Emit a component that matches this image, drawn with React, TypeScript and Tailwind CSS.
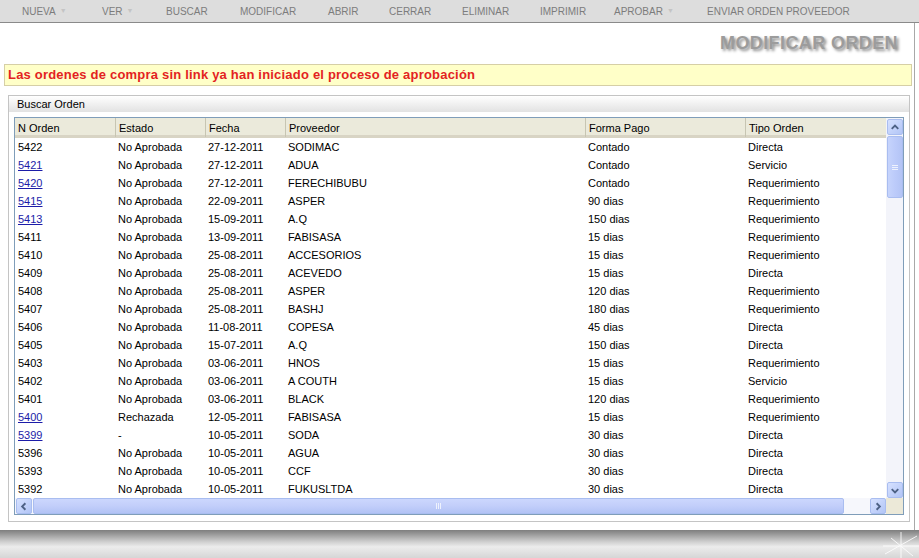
import React from 'react'

type Row = { n: string; link?: boolean; estado: string; fecha: string; prov: string; pago: string; tipo: string }

const rows: Row[] = [
  { n: '5422', estado: 'No Aprobada', fecha: '27-12-2011', prov: 'SODIMAC', pago: 'Contado', tipo: 'Directa' },
  { n: '5421', link: true, estado: 'No Aprobada', fecha: '27-12-2011', prov: 'ADUA', pago: 'Contado', tipo: 'Servicio' },
  { n: '5420', link: true, estado: 'No Aprobada', fecha: '27-12-2011', prov: 'FERECHIBUBU', pago: 'Contado', tipo: 'Requerimiento' },
  { n: '5415', link: true, estado: 'No Aprobada', fecha: '22-09-2011', prov: 'ASPER', pago: '90 dias', tipo: 'Requerimiento' },
  { n: '5413', link: true, estado: 'No Aprobada', fecha: '15-09-2011', prov: 'A.Q', pago: '150 dias', tipo: 'Requerimiento' },
  { n: '5411', estado: 'No Aprobada', fecha: '13-09-2011', prov: 'FABISASA', pago: '15 dias', tipo: 'Requerimiento' },
  { n: '5410', estado: 'No Aprobada', fecha: '25-08-2011', prov: 'ACCESORIOS', pago: '15 dias', tipo: 'Requerimiento' },
  { n: '5409', estado: 'No Aprobada', fecha: '25-08-2011', prov: 'ACEVEDO', pago: '15 dias', tipo: 'Directa' },
  { n: '5408', estado: 'No Aprobada', fecha: '25-08-2011', prov: 'ASPER', pago: '120 dias', tipo: 'Requerimiento' },
  { n: '5407', estado: 'No Aprobada', fecha: '25-08-2011', prov: 'BASHJ', pago: '180 dias', tipo: 'Requerimiento' },
  { n: '5406', estado: 'No Aprobada', fecha: '11-08-2011', prov: 'COPESA', pago: '45 dias', tipo: 'Directa' },
  { n: '5405', estado: 'No Aprobada', fecha: '15-07-2011', prov: 'A.Q', pago: '150 dias', tipo: 'Directa' },
  { n: '5403', estado: 'No Aprobada', fecha: '03-06-2011', prov: 'HNOS', pago: '15 dias', tipo: 'Requerimiento' },
  { n: '5402', estado: 'No Aprobada', fecha: '03-06-2011', prov: 'A COUTH', pago: '15 dias', tipo: 'Servicio' },
  { n: '5401', estado: 'No Aprobada', fecha: '03-06-2011', prov: 'BLACK', pago: '120 dias', tipo: 'Requerimiento' },
  { n: '5400', link: true, estado: 'Rechazada', fecha: '12-05-2011', prov: 'FABISASA', pago: '15 dias', tipo: 'Requerimiento' },
  { n: '5399', link: true, estado: '-', fecha: '10-05-2011', prov: 'SODA', pago: '30 dias', tipo: 'Directa' },
  { n: '5396', estado: 'No Aprobada', fecha: '10-05-2011', prov: 'AGUA', pago: '30 dias', tipo: 'Directa' },
  { n: '5393', estado: 'No Aprobada', fecha: '10-05-2011', prov: 'CCF', pago: '30 dias', tipo: 'Directa' },
  { n: '5392', estado: 'No Aprobada', fecha: '10-05-2011', prov: 'FUKUSLTDA', pago: '30 dias', tipo: 'Directa' },
]

const menu = [
  { label: 'NUEVA', arrow: true, w: 'w-[80px]' },
  { label: 'VER', arrow: true, w: 'w-[64px]' },
  { label: 'BUSCAR', w: 'w-[74px]' },
  { label: 'MODIFICAR', w: 'w-[88px]' },
  { label: 'ABRIR', w: 'w-[61px]' },
  { label: 'CERRAR', w: 'w-[73px]' },
  { label: 'ELIMINAR', w: 'w-[78px]' },
  { label: 'IMPRIMIR', w: 'w-[74px]' },
  { label: 'APROBAR', arrow: true, w: 'w-[93px]' },
  { label: 'ENVIAR ORDEN PROVEEDOR', w: 'w-auto' },
]

const cols = 'grid grid-cols-[100px_90px_80px_300px_160px_1fr]'

function Chevron({ dir }: { dir: 'up' | 'down' | 'left' | 'right' }) {
  const pts = {
    up: '4,9 7.5,5.5 11,9',
    down: '4,6 7.5,9.5 11,6',
    left: '9,4 5.5,7.5 9,11',
    right: '6,4 9.5,7.5 6,11',
  }[dir]
  return (
    <svg width="15" height="15" viewBox="0 0 15 15">
      <polyline points={pts} fill="none" stroke="#4d6185" strokeWidth="2" />
    </svg>
  )
}

function ScrollBtn({ dir }: { dir: 'up' | 'down' | 'left' | 'right' }) {
  return (
    <div className="flex h-[16px] w-[16px] items-center justify-center rounded-[2px] border border-[#a9bdf0] bg-linear-to-br from-[#d6e1ff] to-[#b2c5f6]">
      <Chevron dir={dir} />
    </div>
  )
}

export default function App() {
  return (
    <div className="flex h-[558px] w-[919px] flex-col overflow-hidden bg-white font-['Liberation_Sans',Arial,sans-serif]">
      {/* menu */}
      <div className="flex h-[23px] shrink-0 items-center border-b border-[#8a8a8a] bg-[#dddddd] pl-[22px] text-[10px] text-[#7c7c7c]">
        {menu.map((m) => (
          <div key={m.label} className={`${m.w} flex items-center gap-[4px] whitespace-nowrap`}>
            <span>{m.label}</span>
            {m.arrow && <span className="text-[7px] text-[#c4c4c4]">▼</span>}
          </div>
        ))}
      </div>

      {/* main */}
      <div className="flex flex-1 flex-col">
        <div className="mr-[4px] flex flex-1 flex-col border-r border-[#a8a8a8]">
          <div className="flex h-[41px] items-center justify-end pr-[16px]">
            <h1 className="text-[18px] font-bold tracking-[0.4px] text-[#9c9c9c] [text-shadow:2px_2px_3px_#8a8a8a]">
              MODIFICAR ORDEN
            </h1>
          </div>

          <div className="ml-[4px] mr-[2px] flex h-[22px] items-center border border-[#d6cfa6] bg-[#ffffc8] pl-[3px] text-[13px] font-bold tracking-[0.2px] text-[#e3231f]">
            Las ordenes de compra sin link ya han iniciado el proceso de aprobación
          </div>

          {/* panel */}
          <div className="ml-[8px] mr-[4px] mt-[9px] flex h-[427px] flex-col border border-[#c4c4c4]">
            <div className="flex h-[16px] items-center bg-linear-to-b from-[#ffffff] to-[#e2e2e2] pl-[8px] text-[11px] text-black">
              Buscar Orden
            </div>
            <div className="flex-1 px-[5px] pb-[6px] pt-[5px]">
              <div className="flex h-[398px] flex-col border border-[#7f9db9] text-[11px] text-black">
                <div className="flex flex-1">
                  <div className="flex flex-1 flex-col">
                    <div className={`${cols} h-[20px] items-center border-b-[3px] border-[#d8d4c4] bg-[#ebeadb]`}>
                      {['N Orden', 'Estado', 'Fecha', 'Proveedor', 'Forma Pago', 'Tipo Orden'].map((h, i) => (
                        <div key={h} className={`h-full pt-[2px] ${i > 0 ? 'border-l border-[#c7c5b2] pl-[3px]' : 'pl-[3px]'}`}>
                          {h}
                        </div>
                      ))}
                    </div>
                    {rows.map((r) => (
                      <div key={r.n} className={`${cols} h-[18px] items-center`}>
                        <div className="pl-[3px]">
                          {r.link ? <span className="text-[#1c1ca8] underline">{r.n}</span> : r.n}
                        </div>
                        <div className="pl-[3px]">{r.estado}</div>
                        <div className="pl-[3px]">{r.fecha}</div>
                        <div className="pl-[3px]">{r.prov}</div>
                        <div className="pl-[3px]">{r.pago}</div>
                        <div className="pl-[3px]">{r.tipo}</div>
                      </div>
                    ))}
                  </div>
                  {/* vertical scrollbar */}
                  <div className="flex w-[17px] flex-col items-center gap-[1px] bg-[#f3f4fa] pt-[1px]">
                    <ScrollBtn dir="up" />
                    <div className="flex h-[62px] w-[16px] items-center justify-center rounded-[2px] border border-[#a9bdf0] bg-linear-to-r from-[#c6d4fc] via-[#bccbfa] to-[#b3c4f5]">
                      <div className="flex flex-col gap-[1px]">
                        <div className="h-[1px] w-[6px] bg-[#eef2fd]" />
                        <div className="h-[1px] w-[6px] bg-[#eef2fd]" />
                        <div className="h-[1px] w-[6px] bg-[#eef2fd]" />
                      </div>
                    </div>
                    <div className="flex-1" />
                    <ScrollBtn dir="down" />
                  </div>
                </div>
                {/* horizontal scrollbar */}
                <div className="flex h-[17px] items-center">
                  <div className="flex flex-1 items-center gap-[1px] bg-[#f6f7fc] pl-[1px]">
                    <ScrollBtn dir="left" />
                    <div className="flex h-[16px] w-[811px] items-center justify-center rounded-[2px] border border-[#a9bdf0] bg-linear-to-b from-[#ccd7fd] via-[#c2cefa] to-[#b2c3f5]">
                      <div className="flex gap-[1px]">
                        <div className="h-[6px] w-[1px] bg-[#eef2fd]" />
                        <div className="h-[6px] w-[1px] bg-[#eef2fd]" />
                        <div className="h-[6px] w-[1px] bg-[#eef2fd]" />
                      </div>
                    </div>
                    <div className="flex-1" />
                    <ScrollBtn dir="right" />
                  </div>
                  <div className="h-full w-[17px] bg-[#ece9d8]" />
                </div>
              </div>
            </div>
          </div>
          <div className="flex-1" />
        </div>
      </div>

      {/* footer */}
      <div className="relative h-[28px] shrink-0 bg-[linear-gradient(to_bottom,#7e7e7e_0%,#989898_14%,#cfcfcf_42%,#ececec_60%,#d6d6d6_100%)]">
        <svg className="absolute right-0 top-0" width="40" height="28" viewBox="0 0 40 28">
          <g stroke="#ffffff" strokeWidth="1" opacity="0.85">
            <line x1="6" y1="24" x2="38" y2="6" />
            <line x1="12" y1="8" x2="34" y2="26" />
            <line x1="22" y1="2" x2="22" y2="28" />
            <line x1="4" y1="16" x2="40" y2="16" />
          </g>
        </svg>
      </div>
    </div>
  )
}
